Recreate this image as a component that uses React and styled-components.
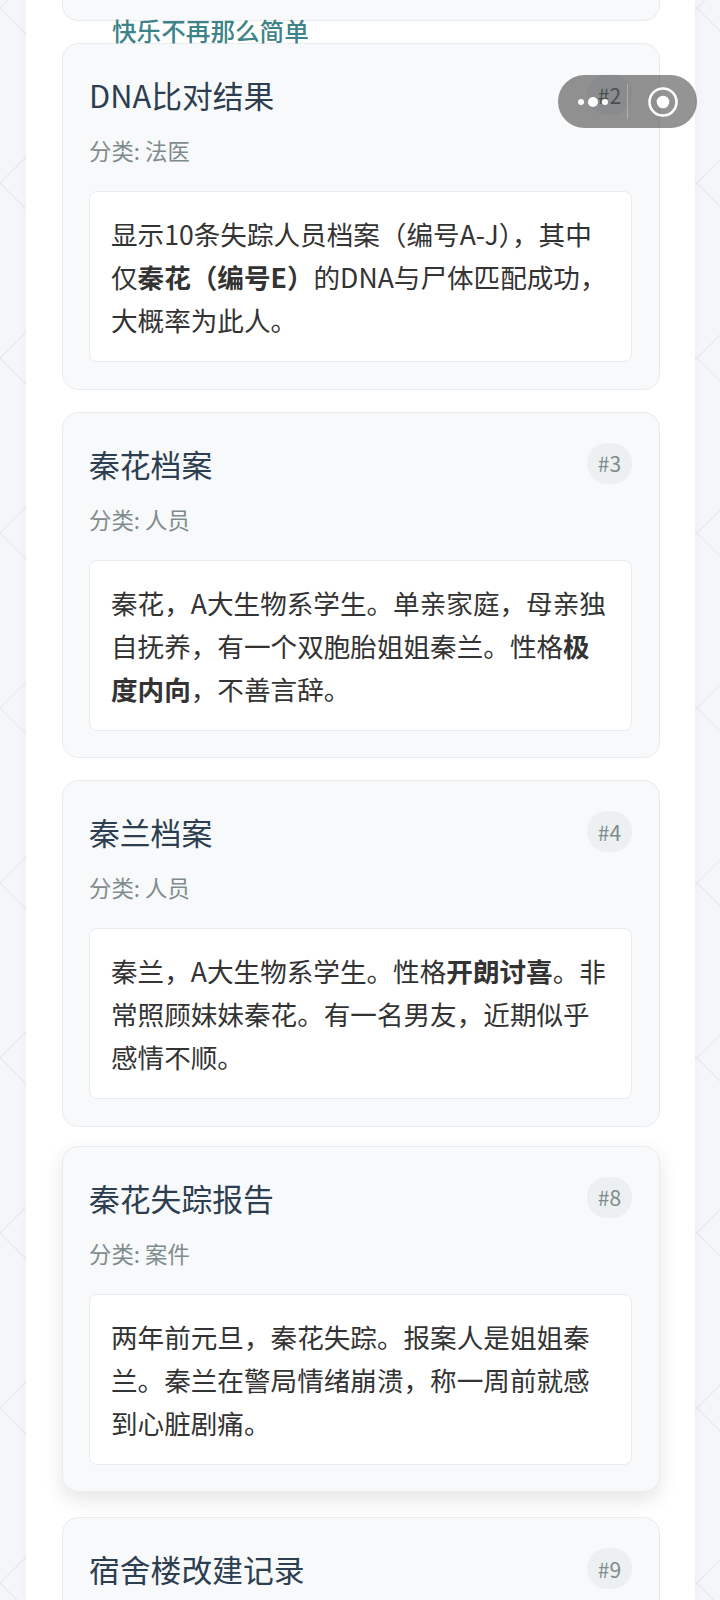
import React from "react";
import styled, { createGlobalStyle } from "styled-components";

const tile = encodeURIComponent(
  '<svg xmlns="http://www.w3.org/2000/svg" width="174.25" height="175"><path d="M0 0L174.25 175M174.25 0L0 175" stroke="#e6e9ee" stroke-width="1.2" fill="none"/></svg>'
);

const GlobalStyle = createGlobalStyle`
  html, body {
    margin: 0;
    padding: 0;
    height: 1600px;
    overflow: hidden;
  }
  body {
    background-color: #f4f6fa;
    background-image: url("data:image/svg+xml,${tile}");
    background-size: 174.25px 175px;
    background-position: 0 8px;
    font-family: "Noto Sans CJK SC", "Noto Sans", sans-serif;
  }
`;

const Page = styled.div`
  position: relative;
  height: 1600px;
  overflow: hidden;
`;

const Panel = styled.main`
  margin: 0 25px 0 26px;
  height: 100%;
  padding: 0 35px 0 36px;
  background: #fff;
  box-shadow: 0 0 12px rgba(0, 0, 0, 0.03);
  box-sizing: border-box;
`;

const CardList = styled.div`
  display: flex;
  flex-direction: column;
  gap: 22px;
`;

const CutCard = styled.div`
  height: 21px;
  box-sizing: border-box;
  background: #f8f9fa;
  border: 1px solid #e9ecef;
  border-top: 0;
  border-radius: 0 0 16px 16px;
`;

const Card = styled.article`
  box-sizing: border-box;
  height: 346.5px;
  flex-shrink: 0;
  padding: 27px 27px 27px 26px;
  background: #f8f9fa;
  border: 1px solid #e9ecef;
  border-radius: 16px;
  transform: ${({ $raised }) => ($raised ? "translateY(-3px)" : "none")};
  box-shadow: ${({ $raised }) =>
    $raised ? "0 8px 20px rgba(0, 0, 0, 0.1)" : "none"};
`;

const CardHeader = styled.header`
  display: flex;
  justify-content: space-between;
  align-items: flex-start;
  height: 63px;
`;

const Title = styled.h3`
  margin: 0;
  font-size: 30.8px;
  font-weight: 400;
  line-height: 47px;
  color: #2c3e50;
`;

const Badge = styled.span`
  display: flex;
  align-items: center;
  justify-content: center;
  width: 45px;
  height: 41px;
  margin-top: 3px;
  border-radius: 20px;
  background: #ecf0f1;
  color: #7f8c8d;
  font-size: 21px;
`;

const Category = styled.div`
  font-size: 22.4px;
  line-height: 32px;
  color: #7f8c8d;
  margin-bottom: 25px;
`;

const Content = styled.div`
  padding: 20px 22px 20px 21px;
  background: #fff;
  border: 1px solid #e9ecef;
  border-radius: 8px;
  font-size: 26.6px;
  line-height: 43px;
  color: #333;

  strong {
    font-weight: 700;
  }
`;

const Floating = styled.div`
  position: absolute;
  left: 112px;
  top: 12px;
  font-size: 24.6px;
  line-height: 36px;
  font-weight: 500;
  color: #3e8388;
`;

const Capsule = styled.div`
  position: absolute;
  left: 558px;
  top: 75px;
  width: 139px;
  height: 53px;
  border-radius: 27px;
  background: rgba(0, 0, 0, 0.42);
  display: flex;
  align-items: center;
`;

const MoreButton = styled.div`
  width: 69px;
  display: flex;
  justify-content: center;
  align-items: center;
  gap: 4px;
`;

const Dot = styled.i`
  display: block;
  width: ${({ $size }) => $size}px;
  height: ${({ $size }) => $size}px;
  border-radius: 50%;
  background: #fff;
`;

const Divider = styled.div`
  width: 1px;
  height: 35px;
  background: rgba(255, 255, 255, 0.3);
`;

const CloseButton = styled.div`
  flex: 1;
  display: flex;
  justify-content: center;
  align-items: center;
  padding-left: 1px;
`;

const cards = [
  {
    id: 2,
    title: "DNA比对结果",
    category: "法医",
    body: (
      <>
        显示10条失踪人员档案（编号A-J），其中仅<strong>秦花（编号E）</strong>
        的DNA与尸体匹配成功，大概率为此人。
      </>
    ),
  },
  {
    id: 3,
    title: "秦花档案",
    category: "人员",
    body: (
      <>
        秦花，A大生物系学生。单亲家庭，母亲独自抚养，有一个双胞胎姐姐秦兰。性格
        <strong>极度内向</strong>，不善言辞。
      </>
    ),
  },
  {
    id: 4,
    title: "秦兰档案",
    category: "人员",
    body: (
      <>
        秦兰，A大生物系学生。性格<strong>开朗讨喜</strong>
        。非常照顾妹妹秦花。有一名男友，近期似乎感情不顺。
      </>
    ),
  },
  {
    id: 8,
    title: "秦花失踪报告",
    category: "案件",
    raised: true,
    body: <>两年前元旦，秦花失踪。报案人是姐姐秦兰。秦兰在警局情绪崩溃，称一周前就感到心脏剧痛。</>,
  },
  {
    id: 9,
    title: "宿舍楼改建记录",
    category: "案件",
    body: <>宿舍楼曾于两年前改建。</>,
  },
];

const App = () => (
  <Page lang="zh-CN">
    <GlobalStyle />
    <Panel>
      <CardList>
        <CutCard />
        {cards.map((card) => (
          <Card key={card.id} $raised={card.raised}>
            <CardHeader>
              <Title>{card.title}</Title>
              <Badge>#{card.id}</Badge>
            </CardHeader>
            <Category>分类: {card.category}</Category>
            <Content>{card.body}</Content>
          </Card>
        ))}
      </CardList>
    </Panel>
    <Floating>快乐不再那么简单</Floating>
    <Capsule>
      <MoreButton>
        <Dot $size={6} />
        <Dot $size={10} />
        <Dot $size={6} />
      </MoreButton>
      <Divider />
      <CloseButton>
        <svg width="32" height="32" viewBox="0 0 32 32">
          <circle cx="16" cy="16" r="13.5" fill="none" stroke="#fff" strokeWidth="2.6" />
          <circle cx="16" cy="16" r="6.3" fill="#fff" />
        </svg>
      </CloseButton>
    </Capsule>
  </Page>
);

export default App;
